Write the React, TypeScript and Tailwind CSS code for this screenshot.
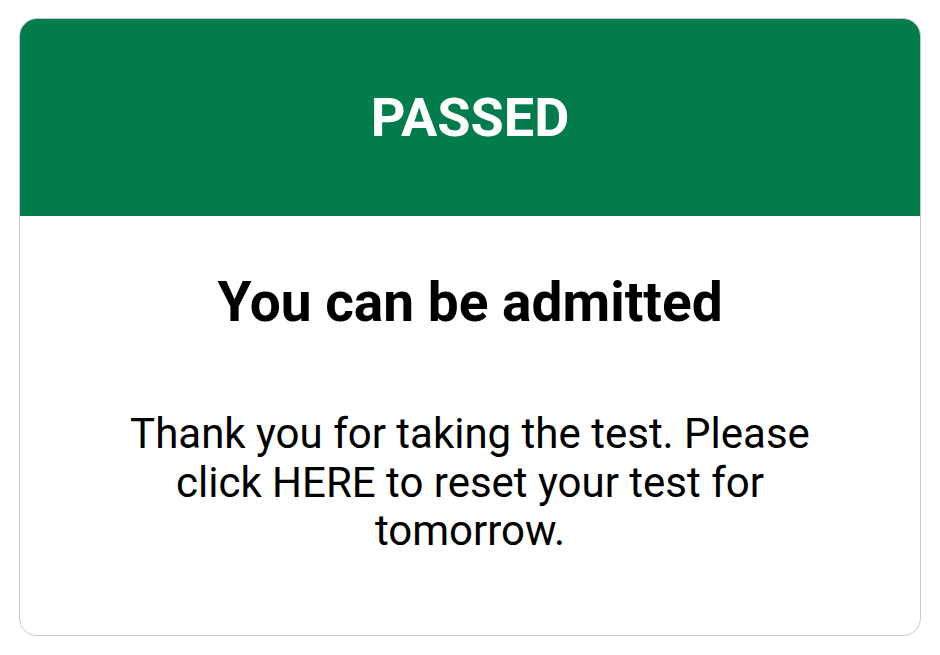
export default function App() {
  return (
    <div
      className="min-h-screen bg-white px-[19px] pt-[18px]"
      style={{ fontFamily: "Roboto, 'Liberation Sans', sans-serif" }}
    >
      <div className="h-[618px] overflow-hidden rounded-[18px] border border-[#c8c8c8] bg-white">
        {/* Result banner */}
        <div className="flex h-[197px] items-center justify-center bg-[#037c4b]">
          <h1 className="text-[54px] font-bold leading-none text-white">PASSED</h1>
        </div>

        <div className="flex flex-col items-center pt-[53px] text-center text-black">
          <h2 className="text-[55px] font-bold leading-[66px]">You can be admitted</h2>
          <p className="mt-[75px] w-[740px] text-[42px] leading-[48.5px]">
            Thank you for taking the test. Please click HERE to reset your test for tomorrow.
          </p>
        </div>
      </div>
    </div>
  );
}
